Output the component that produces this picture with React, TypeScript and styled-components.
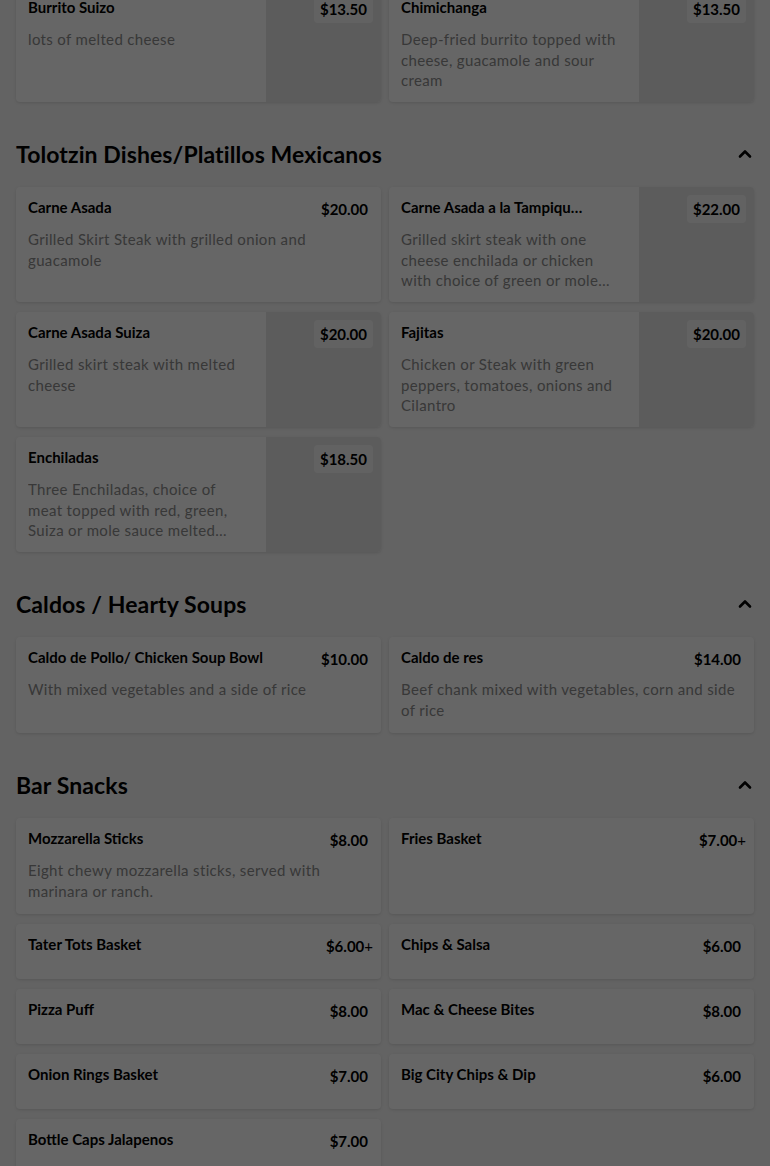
import React from "react";
import styled, { createGlobalStyle } from "styled-components";

const GlobalStyle = createGlobalStyle`
  html, body { margin: 0; padding: 0; background: #f7f7f7; }
  body { font-family: Lato, "Noto Sans", sans-serif; color: #000; overflow: hidden; }
  * { box-sizing: border-box; }
`;

type Item = { name: string; price: string; plus?: boolean; desc?: string; image?: boolean };
type Section = { title: string; items: Item[] };

const carryOver: Item[] = [
  { name: "Burrito Suizo", price: "$13.50", desc: "lots of melted cheese", image: true },
  { name: "Chimichanga", price: "$13.50", desc: "Deep-fried burrito topped with cheese, guacamole and sour cream", image: true },
];

const sections: Section[] = [
  {
    title: "Tolotzin Dishes/Platillos Mexicanos",
    items: [
      { name: "Carne Asada", price: "$20.00", desc: "Grilled Skirt Steak with grilled onion and guacamole" },
      { name: "Carne Asada a la Tampiqueña", price: "$22.00", desc: "Grilled skirt steak with one cheese enchilada or chicken with choice of green or mole sauce, rice and beans", image: true },
      { name: "Carne Asada Suiza", price: "$20.00", desc: "Grilled skirt steak with melted cheese", image: true },
      { name: "Fajitas", price: "$20.00", desc: "Chicken or Steak with green peppers, tomatoes, onions and Cilantro", image: true },
      { name: "Enchiladas", price: "$18.50", desc: "Three Enchiladas, choice of meat topped with red, green, Suiza or mole sauce melted cheese and sour cream", image: true },
    ],
  },
  {
    title: "Caldos / Hearty Soups",
    items: [
      { name: "Caldo de Pollo/ Chicken Soup Bowl", price: "$10.00", desc: "With mixed vegetables and a side of rice" },
      { name: "Caldo de res", price: "$14.00", desc: "Beef chank mixed with vegetables, corn and side of rice" },
    ],
  },
  {
    title: "Bar Snacks",
    items: [
      { name: "Mozzarella Sticks", price: "$8.00", desc: "Eight chewy mozzarella sticks, served with marinara or ranch." },
      { name: "Fries Basket", price: "$7.00", plus: true },
      { name: "Tater Tots Basket", price: "$6.00", plus: true },
      { name: "Chips & Salsa", price: "$6.00" },
      { name: "Pizza Puff", price: "$8.00" },
      { name: "Mac & Cheese Bites", price: "$8.00" },
      { name: "Onion Rings Basket", price: "$7.00" },
      { name: "Big City Chips & Dip", price: "$6.00" },
      { name: "Bottle Caps Jalapenos", price: "$7.00" },
    ],
  },
];

const Page = styled.main`
  padding: 0 16px 40px;
  margin-top: -13px;
`;

const Grid = styled.div`
  display: grid;
  grid-template-columns: 1fr 1fr;
  gap: 10px 8px;
`;

const SectionBlock = styled.section`
  padding-top: 32px;
`;

const SectionHeader = styled.header`
  display: flex;
  align-items: center;
  justify-content: space-between;
  height: 40px;
  margin-bottom: 13px;
`;

const SectionTitle = styled.h2`
  margin: 0;
  font-family: Lato, sans-serif;
  font-weight: 700;
  font-size: 23px;
  letter-spacing: 0.1px;
  color: #000;
`;

const ToggleButton = styled.button`
  width: 18px;
  height: 18px;
  padding: 0;
  border: 0;
  background: transparent;
  display: flex;
  align-items: center;
  justify-content: center;
  color: #000;
`;

const Card = styled.article<{ $image?: boolean }>`
  position: relative;
  display: flex;
  background: #ffffff;
  border-radius: 4px;
  box-shadow: 0 1px 3px rgba(0, 0, 0, 0.12);
  overflow: hidden;
  ${(p) => (p.$image ? "height: 115px;" : "")}
`;

const Body = styled.div`
  flex: 1;
  min-width: 0;
  padding: 12px 12px 13px;
  display: flex;
  flex-direction: column;
`;

const HeaderRow = styled.div<{ $image?: boolean }>`
  display: flex;
  align-items: flex-start;
  justify-content: space-between;
  min-height: 20px;
  margin-right: -5px;
  ${(p) => (p.$image ? "padding-right: 42px;" : "")}
`;

const Title = styled.h3`
  margin: -2px 0 0;
  flex: 1;
  min-width: 0;
  font-family: Lato, sans-serif;
  font-weight: 700;
  font-size: 15px;
  line-height: 20px;
  color: #000;
  white-space: nowrap;
  overflow: hidden;
  text-overflow: ellipsis;
`;

const Price = styled.span<{ $overlay?: boolean }>`
  flex: none;
  display: inline-flex;
  align-items: center;
  height: 28px;
  padding: 0 6px;
  margin: -4px 0;
  border-radius: 4px;
  font-family: Lato, sans-serif;
  font-weight: 700;
  font-size: 15px;
  color: #000;
  background: ${(p) => (p.$overlay ? "#f6f6f6" : "transparent")};
`;

const Plus = styled.span`
  font-weight: 400;
  margin-right: -5px;
`;

const Desc = styled.p`
  margin: 10px 0 0;
  font-family: Lato, sans-serif;
  font-size: 15px;
  line-height: 20.5px;
  letter-spacing: 0.35px;
  color: #8c8c8c;
  display: -webkit-box;
  -webkit-line-clamp: 3;
  -webkit-box-orient: vertical;
  overflow: hidden;
`;

const Thumb = styled.div`
  position: relative;
  flex: none;
  width: 115px;
  background: #e6e6e6;
`;

const OverlayPrice = styled.div`
  position: absolute;
  top: 8px;
  right: 8px;
  margin-top: 4px;
`;

const Backdrop = styled.div`
  position: fixed;
  inset: 0;
  background: rgba(0, 0, 0, 0.6);
  pointer-events: none;
`;

const Chevron = () => (
  <svg width="18" height="18" viewBox="0 0 18 18" fill="none">
    <path d="M4 11.5 L9 6.5 L14 11.5" stroke="currentColor" strokeWidth="2.6" strokeLinecap="round" strokeLinejoin="round" />
  </svg>
);

const PriceTag = ({ item, overlay }: { item: Item; overlay?: boolean }) => (
  <Price $overlay={overlay}>
    {item.price}
    {item.plus && <Plus>+</Plus>}
  </Price>
);

const MenuCard = ({ item }: { item: Item }) => (
  <Card $image={item.image}>
    <Body>
      <HeaderRow $image={item.image}>
        <Title>{item.name}</Title>
        {!item.image && <PriceTag item={item} />}
      </HeaderRow>
      <Desc>{item.desc ?? ""}</Desc>
    </Body>
    {item.image && (
      <Thumb>
        <OverlayPrice>
          <PriceTag item={item} overlay />
        </OverlayPrice>
      </Thumb>
    )}
  </Card>
);

export default function App() {
  return (
    <>
      <GlobalStyle />
      <Page>
        <Grid>
          {carryOver.map((it) => (
            <MenuCard key={it.name} item={it} />
          ))}
        </Grid>
        {sections.map((s) => (
          <SectionBlock key={s.title}>
            <SectionHeader>
              <SectionTitle>{s.title}</SectionTitle>
              <ToggleButton aria-label="Collapse section">
                <Chevron />
              </ToggleButton>
            </SectionHeader>
            <Grid>
              {s.items.map((it) => (
                <MenuCard key={it.name} item={it} />
              ))}
            </Grid>
          </SectionBlock>
        ))}
      </Page>
      <Backdrop />
    </>
  );
}
